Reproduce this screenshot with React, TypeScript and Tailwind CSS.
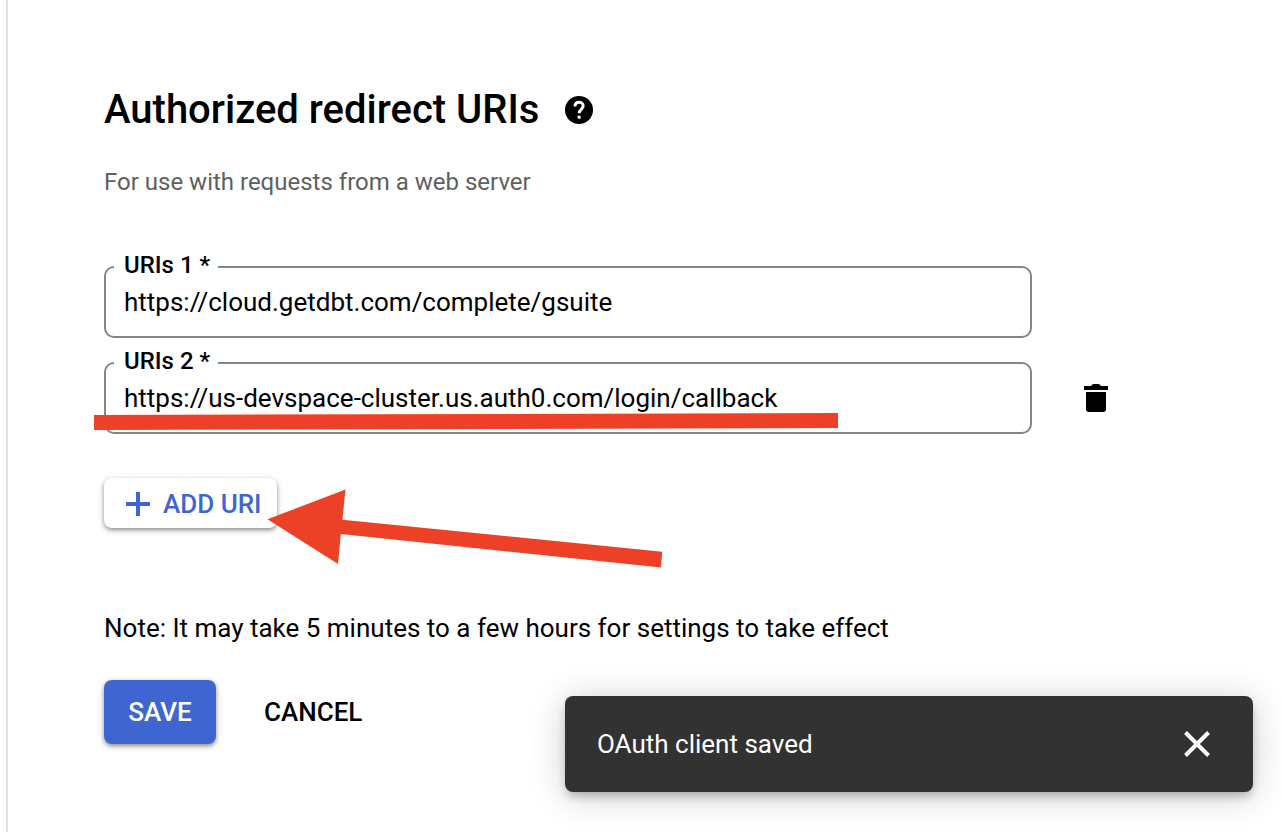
import React, { useState } from "react";

function HelpIcon() {
  return (
    <svg aria-hidden="true" viewBox="0 0 32 32" className="size-8 shrink-0">
      <circle cx="16" cy="16" r="14" fill="currentColor" />
      <path d="M12 12.500C12 9.900 13.700 8.300 16.100 8.300S20.200 9.900 20.200 12.100C20.200 15 16.200 15.300 16.200 19.300" fill="none" stroke="#fff" strokeWidth="2.900" />
      <path d="M14.600 21.700h3v3h-3z" fill="#fff" />
    </svg>
  );
}

function TrashIcon() {
  return (
    <svg aria-hidden="true" viewBox="0 0 32 32" className="size-8 shrink-0">
      <path d="M4 4h7q1-2 3-2h4q2 0 3 2h7v4H4zM6 10h20v17q0 3-3 3H9q-3 0-3-3z" fill="currentColor" />
    </svg>
  );
}

function PlusIcon() {
  return (
    <svg aria-hidden="true" viewBox="0 0 24 24" className="size-6 shrink-0">
      <path d="M10 0h4v10h10v4H14v10h-4V14H0v-4h10z" fill="currentColor" />
    </svg>
  );
}

function CloseIcon() {
  return (
    <svg aria-hidden="true" viewBox="0 0 48 48" className="size-12 shrink-0">
      <path d="M12.500 12.500l23 23M35.500 12.500l-23 23" fill="none" stroke="currentColor" strokeWidth="4" />
    </svg>
  );
}

function UriField({ id, label, value, onChange, onDelete }: {
  id: string;
  label: string;
  value: string;
  onChange: (v: string) => void;
  onDelete?: () => void;
}) {
  return (
    <div className="relative flex h-[72px] items-center gap-12">
      <input
        id={id}
        value={value}
        onChange={(e) => onChange(e.target.value)}
        className="h-full min-w-0 max-w-[928px] flex-1 rounded-[10px] border-2 border-[#80868b] bg-white px-[18px] text-[26px] text-black outline-none"
      />
      <label htmlFor={id} className="absolute -top-4 left-[10px] bg-white pr-2 pl-[10px] text-2xl leading-[30px] font-medium text-black">
        {label}
      </label>
      {onDelete && (
        <button aria-label={`Delete ${label}`} onClick={onDelete} className="text-black">
          <TrashIcon />
        </button>
      )}
    </div>
  );
}

export default function App() {
  const [first, setFirst] = useState("https://cloud.getdbt.com/complete/gsuite");
  const [second, setSecond] = useState("https://us-devspace-cluster.us.auth0.com/login/callback");
  return (
    <div className="relative min-h-screen bg-white pl-[6px] font-[Roboto,sans-serif] text-black">
      <main className="min-h-screen border-l-2 border-[#e0e0e0] pt-[84px] pl-24">
        <div className="flex items-center gap-6">
          <h1 className="text-[40px] leading-[52px] font-medium">Authorized redirect URIs</h1>
          <HelpIcon />
        </div>
        <p className="mt-[30px] text-2xl leading-8 text-[#5f5f5f]">For use with requests from a web server</p>
        <div className="relative mt-[68px] flex flex-col gap-6">
          <UriField id="uri1" label="URIs 1 *" value={first} onChange={setFirst} />
          <UriField id="uri2" label="URIs 2 *" value={second} onChange={setSecond} onDelete={() => setSecond("")} />
          <svg aria-hidden="true" viewBox="94 410 750 24" className="pointer-events-none absolute top-36 -left-[10px] h-6 w-[750px]">
            <path d="M94 415 838 413V428L94 430Z" fill="#ec4127" />
          </svg>
        </div>
        <div className="relative mt-[44px] flex">
          <button className="flex h-[50px] items-center gap-[13px] rounded-lg bg-white pt-[2px] pr-4 pl-[22px] text-[26px] font-medium text-[#3f66d0] shadow-[0_2px_4px_rgba(0,0,0,0.4),0_2px_10px_rgba(0,0,0,0.1)]">
            <PlusIcon />
            ADD URI
          </button>
          <svg aria-hidden="true" viewBox="264 488 400 80" className="pointer-events-none absolute top-[10px] left-40 h-20 w-[400px]">
            <path d="M267.500 519.200 345.500 489.500 342.400 519.800 662.200 551.800 661 567.500 340.800 534 338 564Z" fill="#ec4127" />
          </svg>
        </div>
        <p className="mt-[84px] text-[26px] leading-8">Note: It may take 5 minutes to a few hours for settings to take effect</p>
        <div className="mt-9 flex gap-6">
          <button className="h-16 min-w-28 rounded-lg bg-[#3f66d0] px-6 text-[26px] font-medium text-white shadow-[0_2px_4px_rgba(0,0,0,0.4),0_2px_10px_rgba(0,0,0,0.1)]">SAVE</button>
          <button className="h-16 px-6 text-[26px] font-medium">CANCEL</button>
        </div>
      </main>
      <div role="status" className="absolute right-[29px] bottom-10 flex h-24 w-[688px] items-center justify-between rounded-lg bg-[#323232] px-8 text-[26px] text-white shadow-[0_6px_10px_-2px_rgba(0,0,0,0.25),0_4px_36px_rgba(0,0,0,0.2)]">
        OAuth client saved
        <button aria-label="Close"><CloseIcon /></button>
      </div>
    </div>
  );
}
